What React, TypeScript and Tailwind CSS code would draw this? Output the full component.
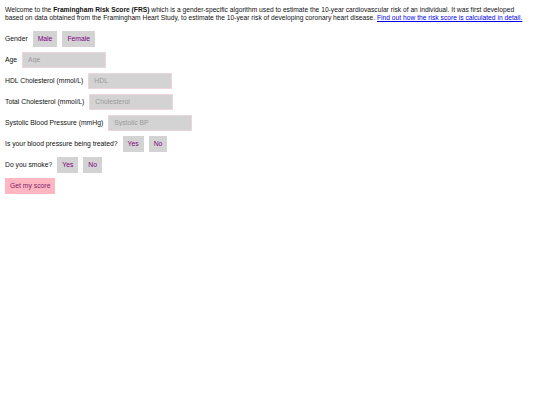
import React from "react";

const btnClass = "h-4 bg-[#d3d3d3] px-[5px] text-[6.8px] leading-4 text-[#800080]";
const inputClass =
  "h-4 w-[84px] border border-[#ecd5db] bg-[#d3d3d3] px-[5px] text-[6.8px] text-[#555] outline-none placeholder:text-[#9a9a9a]";

function Row({ label, children }: { label: string; children: React.ReactNode }) {
  return (
    <div className="flex h-4 items-center gap-[5px]">
      <span className="text-[6.8px]">{label}</span>
      {children}
    </div>
  );
}

export default function App() {
  return (
    <div className="min-h-[405px] bg-white px-[5px] pt-[6px] text-[#111]" style={{ fontFamily: '"Liberation Sans", Arial, sans-serif' }}>
      <p className="max-w-[524px] text-[6.7px] leading-[7.8px]">
        Welcome to the <b>Framingham Risk Score (FRS)</b> which is a gender-specific algorithm used to estimate the 10-year
        cardiovascular risk of an individual. It was first developed based on data obtained from the Framingham Heart Study, to
        estimate the 10-year risk of developing coronary heart disease.{" "}
        <a href="#" className="text-[#0000ee] underline">
          Find out how the risk score is calculated in detail.
        </a>
      </p>

      <form className="mt-[9px] flex flex-col items-start gap-[5px]">
        <Row label="Gender">
          <button type="button" className={btnClass}>Male</button>
          <button type="button" className={btnClass}>Female</button>
        </Row>
        <Row label="Age">
          <input className={inputClass} placeholder="Age" />
        </Row>
        <Row label="HDL Cholesterol (mmol/L)">
          <input className={inputClass} placeholder="HDL" />
        </Row>
        <Row label="Total Cholesterol (mmol/L)">
          <input className={inputClass} placeholder="Cholesterol" />
        </Row>
        <Row label="Systolic Blood Pressure (mmHg)">
          <input className={inputClass} placeholder="Systolic BP" />
        </Row>
        <Row label="Is your blood pressure being treated?">
          <button type="button" className={btnClass}>Yes</button>
          <button type="button" className={btnClass}>No</button>
        </Row>
        <Row label="Do you smoke?">
          <button type="button" className={btnClass}>Yes</button>
          <button type="button" className={btnClass}>No</button>
        </Row>
        <button type="submit" className="h-4 bg-[#ffb6c1] px-[5px] text-[6.8px] leading-4 text-[#7a1f6a]">
          Get my score
        </button>
      </form>
    </div>
  );
}
